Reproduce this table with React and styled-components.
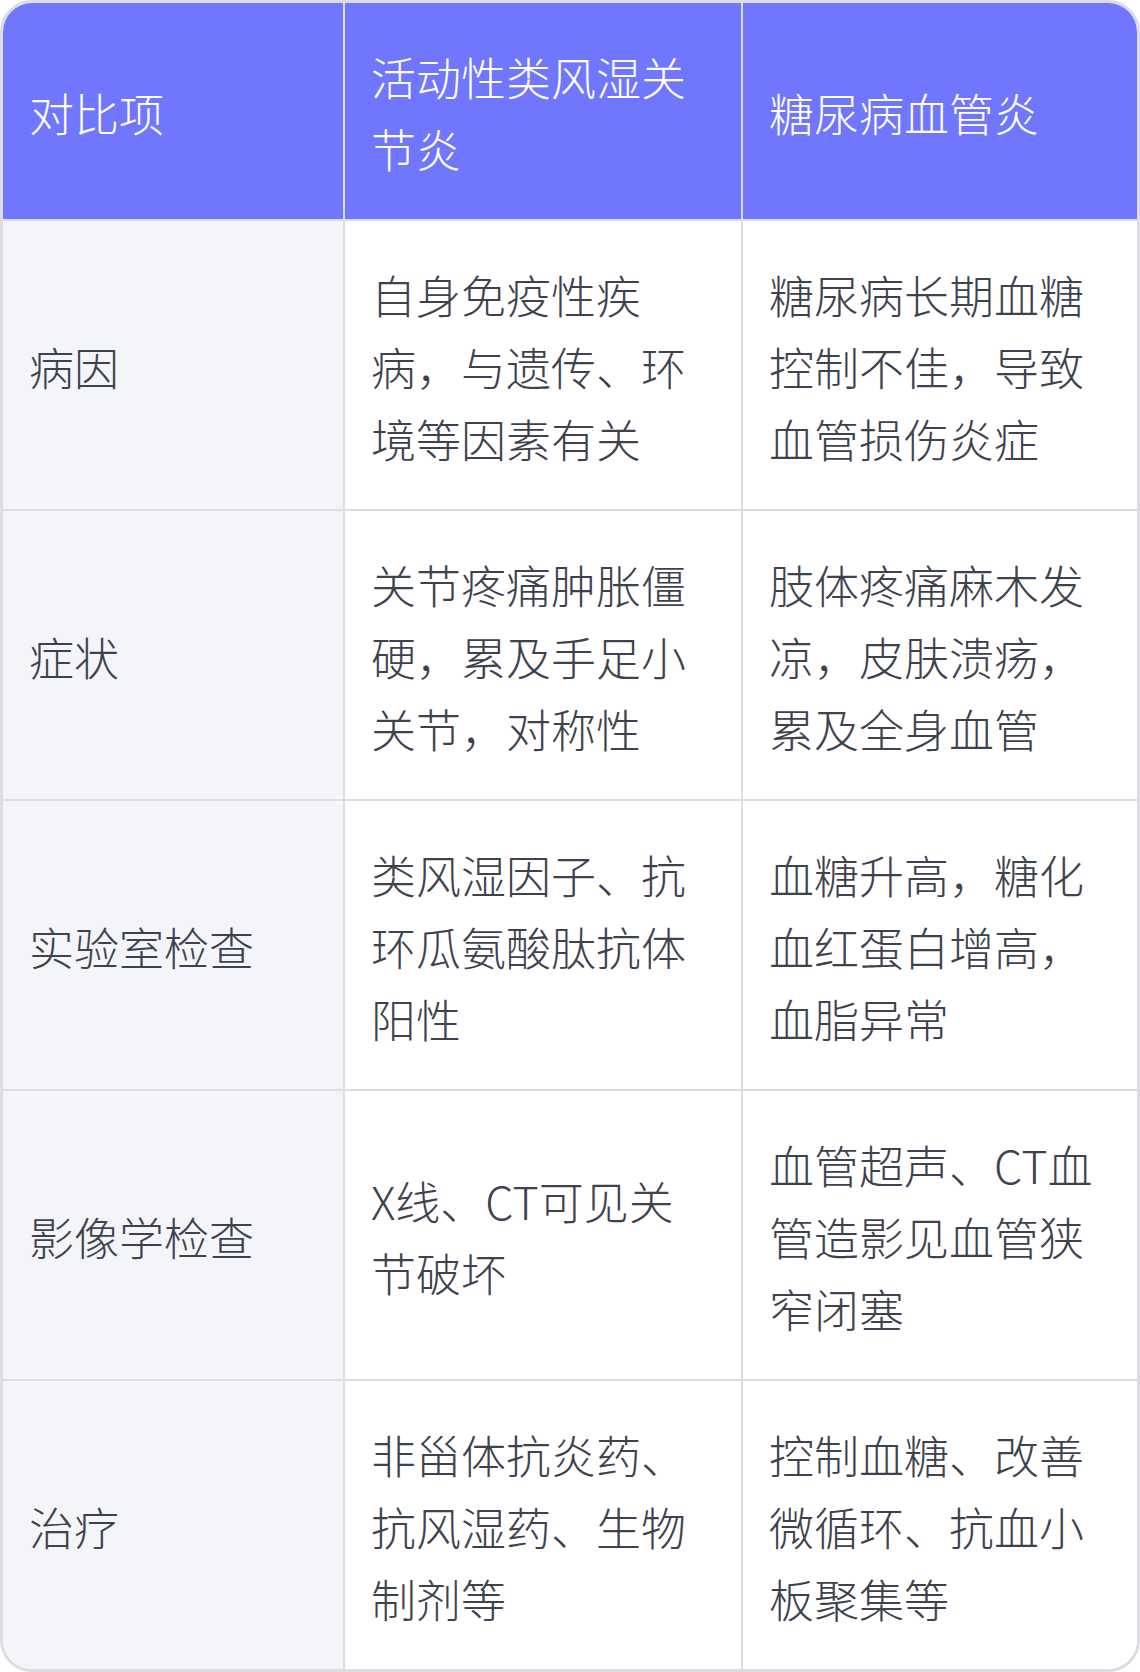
import React from "react";
import styled, { createGlobalStyle } from "styled-components";

const GlobalStyle = createGlobalStyle`
  html, body {
    margin: 0;
    padding: 0;
    background: #ffffff;
  }
  body {
    font-family: "Noto Sans CJK SC", "Noto Sans", sans-serif;
  }
`;

const TableBox = styled.div`
  box-sizing: border-box;
  width: 1140px;
  border: 3px solid #dcdde3;
  border-radius: 32px;
  overflow: hidden;
  display: grid;
  grid-template-columns: 342px 398px 1fr;
`;

const Cell = styled.div`
  box-sizing: border-box;
  display: flex;
  align-items: center;
  padding: 38px 28px 34px 26px;
  font-size: 45px;
  line-height: 72px;
  font-weight: 300;
  color: ${(p) => (p.$head ? "#ffffff" : "#3e424e")};
  background: ${(p) => (p.$head ? "#7176ff" : p.$first ? "#f4f5f9" : "#ffffff")};
  border-right: ${(p) => (p.$last ? "none" : "2px solid #dcdde3")};
  border-bottom: ${(p) => (p.$bottom ? "none" : "2px solid #dcdde3")};
`;

const header = ["对比项", "活动性类风湿关节炎", "糖尿病血管炎"];

// 对比内容
const rows = [
  ["病因", "自身免疫性疾病，与遗传、环境等因素有关", "糖尿病长期血糖控制不佳，导致血管损伤炎症"],
  ["症状", "关节疼痛肿胀僵硬，累及手足小关节，对称性", "肢体疼痛麻木发凉，皮肤溃疡，累及全身血管"],
  ["实验室检查", "类风湿因子、抗环瓜氨酸肽抗体阳性", "血糖升高，糖化血红蛋白增高，血脂异常"],
  ["影像学检查", "X线、CT可见关节破坏", "血管超声、CT血管造影见血管狭窄闭塞"],
  ["治疗", "非甾体抗炎药、抗风湿药、生物制剂等", "控制血糖、改善微循环、抗血小板聚集等"],
];

const App = () => {
  return (
    <>
      <GlobalStyle />
      <TableBox>
        {header.map((h, i) => (
          <Cell key={"h" + i} $head $last={i === 2}>
            {h}
          </Cell>
        ))}
        {rows.map((row, r) =>
          row.map((c, i) => (
            <Cell
              key={r + "-" + i}
              $first={i === 0}
              $last={i === 2}
              $bottom={r === rows.length - 1}
            >
              {c}
            </Cell>
          ))
        )}
      </TableBox>
    </>
  );
};

export default App;
